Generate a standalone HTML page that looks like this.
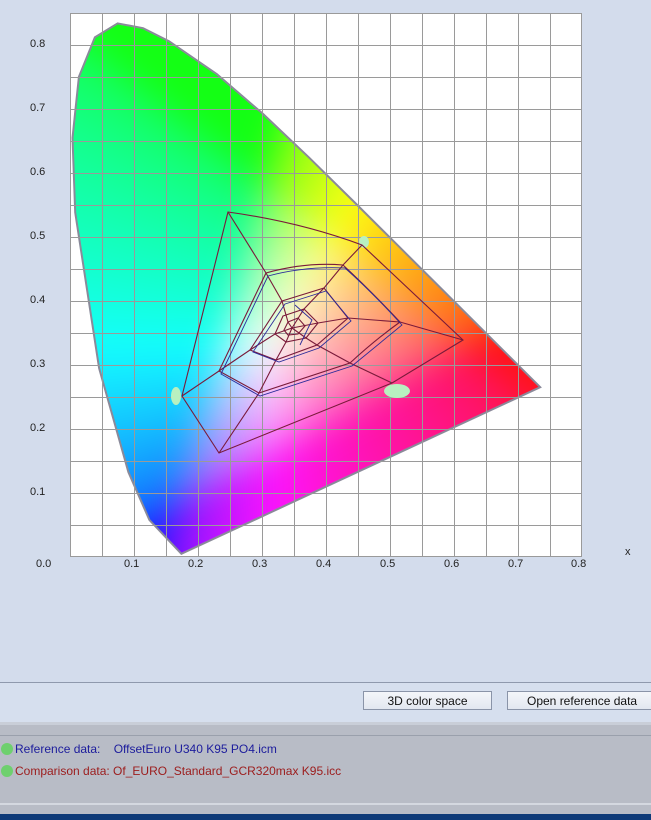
<!DOCTYPE html>
<html><head><meta charset="utf-8">
<style>
html,body{margin:0;padding:0;width:651px;height:820px;overflow:hidden;background:#d3dcec;font-family:"Liberation Sans",sans-serif;}
.lbl{position:absolute;font-size:11px;color:#222;}
.btn{position:absolute;top:691px;height:19px;border:1px solid #8a94a8;background:linear-gradient(#f4f6fa,#e2e7f0);font-size:12px;color:#111;text-align:center;line-height:19px;box-sizing:border-box;}
svg,canvas{position:absolute;left:0;top:0}
</style></head><body>
<svg width="651" height="820">
<rect x="70" y="13" width="512" height="544" fill="#fff"/>
</svg>
<canvas id="cv" width="651" height="600"></canvas>
<script>
(function(){
var W=651,H=600;
var c=document.getElementById('cv'),ctx=c.getContext('2d');
var pts=[[181.4,553.8],[149.4,520],[128.4,472.1],[99.1,368.2],[75.2,212.4],[72.5,137.9],[78.9,76.9],[94.9,37.3],[117.6,23.4],[143.1,28.2],[169,41.2],[216.9,74.2],[263,113.9],[308.8,157.3],[354.2,202],[398,245.6],[438.1,285.5],[471.3,318.6],[512.6,359.7],[540.2,387.2]];
function g(v){v=Math.max(0,Math.min(1,v));v=(v<=0.0031308?12.92*v:1.055*Math.pow(v,1/2.4)-0.055);return 255*Math.pow(v,0.85);}
var ch=[new Float32Array(W*H),new Float32Array(W*H),new Float32Array(W*H)];
for(var py=0;py<H;py++)for(var px=0;px<W;px++){
var x=(px+0.5-70)/640,y=(557-py-0.5)/640;
x=Math.max(0.0,Math.min(0.74,x));y=Math.max(0.005,Math.min(0.84,y));
var X=x/y,Z=Math.max(0,(1-x-y))/y;
var R=3.2406*X-1.5372-0.4986*Z,G=-0.9689*X+1.8758+0.0415*Z,B=0.0557*X-0.2040+1.0570*Z;
R=Math.max(R,0);G=Math.max(G,0);B=Math.max(B,0);var m=Math.max(R,G,B);if(m<=0){m=1;}
var i=py*W+px;ch[0][i]=g(R/m);ch[1][i]=g(G/m);ch[2][i]=g(B/m);}
function blur(a,r){var t=new Float32Array(W*H),n=2*r+1;
for(var y=0;y<H;y++){var s=0;for(var k=-r;k<=r;k++)s+=a[y*W+Math.max(0,Math.min(W-1,k))];
for(var x=0;x<W;x++){t[y*W+x]=s/n;s+=a[y*W+Math.min(W-1,x+r+1)]-a[y*W+Math.max(0,x-r)];}}
for(var x=0;x<W;x++){var s=0;for(var k=-r;k<=r;k++)s+=t[Math.max(0,Math.min(H-1,k))*W+x];
for(var y=0;y<H;y++){a[y*W+x]=s/n;s+=t[Math.min(H-1,y+r+1)*W+x]-t[Math.max(0,y-r)*W+x];}}}
for(var q=0;q<3;q++){blur(ch[q],18);blur(ch[q],18);}
var img=ctx.createImageData(W,H),d=img.data;
for(var i=0;i<W*H;i++){d[i*4]=ch[0][i]*0.92+20;d[i*4+1]=ch[1][i]*0.92+20;d[i*4+2]=ch[2][i]*0.92+20;d[i*4+3]=255;}
var t=document.createElement('canvas');t.width=W;t.height=H;t.getContext('2d').putImageData(img,0,0);
ctx.beginPath();ctx.moveTo(pts[0][0],pts[0][1]);for(var k=1;k<pts.length;k++)ctx.lineTo(pts[k][0],pts[k][1]);ctx.closePath();ctx.clip();
ctx.drawImage(t,0,0);
})();
</script>
<svg width="651" height="820">
<path d="M181.4,553.8 L149.4,520 L128.4,472.1 L99.1,368.2 L75.2,212.4 L72.5,137.9 L78.9,76.9 L94.9,37.3 L117.6,23.4 L143.1,28.2 L169,41.2 L216.9,74.2 L263,113.9 L308.8,157.3 L354.2,202 L398,245.6 L438.1,285.5 L471.3,318.6 L512.6,359.7 L540.2,387.2 Z" fill="none" stroke="#8a8a9a" stroke-width="2"/>
<g stroke="#9a9a9a" stroke-width="1">
<path d="M70.5,13V557M102.5,13V557M134.5,13V557M166.5,13V557M198.5,13V557M230.5,13V557M262.5,13V557M294.5,13V557M326.5,13V557M358.5,13V557M390.5,13V557M422.5,13V557M454.5,13V557M486.5,13V557M518.5,13V557M550.5,13V557M581.5,13V557"/>
<path d="M70,13.5H582M70,45.5H582M70,77.5H582M70,109.5H582M70,141.5H582M70,173.5H582M70,205.5H582M70,237.5H582M70,269.5H582M70,301.5H582M70,333.5H582M70,365.5H582M70,397.5H582M70,429.5H582M70,461.5H582M70,493.5H582M70,525.5H582M70,556.5H582"/>
</g>
<g fill="#b8f0c0">
<ellipse cx="364" cy="242" rx="5" ry="6"/>
<ellipse cx="176" cy="396" rx="5" ry="9"/>
<ellipse cx="397" cy="391" rx="13" ry="7"/>
</g>
<g fill="none" stroke="#7a1a3a" stroke-width="1.1">
<path d="M228,212 Q300,222 362,245 L463,340 L392,383 L219,453 L182,396 Z"/>
<path d="M266,273 Q305,262 343,265 Q370,290 400,322 Q375,340 350,363 L259,393 L219,371 Z"/>
<path d="M282,301 L324,288 L348,318 L317,345 L276,360 L250,350 Z"/>
<path d="M283,316 L304,309 L318,323 L306,338 L286,342 L275,334 Z"/>
<path d="M288,322 L298,318 L305,326 L298,334 L288,335 L284,330 Z"/>
<path d="M228,212 L266,273 L282,301 L288,322 L292,328"/>
<path d="M362,245 L343,265 L324,288 L304,309 L292,328"/>
<path d="M463,340 L400,322 L348,318 L318,323 L292,328"/>
<path d="M392,383 L350,363 L317,345 L306,338 L292,328"/>
<path d="M219,453 L259,393 L276,360 L286,342 L292,328"/>
<path d="M182,396 L219,371 L250,350 L275,334 L292,328"/>
</g>
<g fill="none" stroke="#2a2a9a" stroke-width="0.9">
<path d="M268,276 Q305,266 345,268 Q372,292 402,325 L352,366 L260,396 L221,374 Z"/>
<path d="M285,304 L326,291 L351,321 L319,348 L279,362 L253,352 Z"/>
<path d="M295,305 L312,320 L300,345"/>
</g>
</svg>
<div class="lbl" style="left:30px;top:38px">0.8</div>
<div class="lbl" style="left:30px;top:102px">0.7</div>
<div class="lbl" style="left:30px;top:166px">0.6</div>
<div class="lbl" style="left:30px;top:230px">0.5</div>
<div class="lbl" style="left:30px;top:294px">0.4</div>
<div class="lbl" style="left:30px;top:358px">0.3</div>
<div class="lbl" style="left:30px;top:422px">0.2</div>
<div class="lbl" style="left:30px;top:486px">0.1</div>
<div class="lbl" style="left:36px;top:558px">0.0</div>
<div class="lbl" style="left:124px;top:558px">0.1</div>
<div class="lbl" style="left:188px;top:558px">0.2</div>
<div class="lbl" style="left:252px;top:558px">0.3</div>
<div class="lbl" style="left:316px;top:558px">0.4</div>
<div class="lbl" style="left:380px;top:558px">0.5</div>
<div class="lbl" style="left:444px;top:558px">0.6</div>
<div class="lbl" style="left:508px;top:558px">0.7</div>
<div class="lbl" style="left:571px;top:558px">0.8</div>
<div class="lbl" style="left:625px;top:546px">x</div>
<div style="position:absolute;left:0;top:682px;width:651px;height:1px;background:#8f99ad"></div>
<div style="position:absolute;left:0;top:683px;width:651px;height:39px;background:#d6dfee"></div>
<div class="btn" style="left:363px;width:129px">3D color space</div>
<div class="btn" style="left:507px;width:150px;text-align:left;padding-left:19px">Open reference data</div>
<div style="position:absolute;left:0;top:722px;width:651px;height:93px;background:#b8bcc6;border-top:3px solid #c9ced8;box-sizing:border-box"></div>
<div style="position:absolute;left:0;top:735px;width:651px;height:1px;background:#9aa0ac"></div>
<div style="position:absolute;left:0;top:803px;width:651px;height:2px;background:#d4d8e0"></div>
<div style="position:absolute;left:0;top:814px;width:651px;height:6px;background:#0e3a78"></div>
<div style="position:absolute;left:1px;top:743px;width:12px;height:12px;border-radius:50%;background:#6ed06e"></div>
<div style="position:absolute;left:1px;top:765px;width:12px;height:12px;border-radius:50%;background:#6ed06e"></div>
<div style="position:absolute;left:15px;top:742px;font-size:12px;color:#1c1c9c;white-space:nowrap">Reference data:&nbsp;&nbsp;&nbsp;&nbsp;OffsetEuro U340 K95 PO4.icm</div>
<div style="position:absolute;left:15px;top:764px;font-size:12px;color:#9c1c1c;white-space:nowrap">Comparison data: Of_EURO_Standard_GCR320max K95.icc</div>
</body></html>
